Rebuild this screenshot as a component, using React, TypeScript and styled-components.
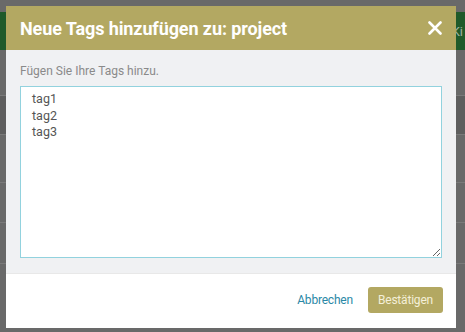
import styled, { createGlobalStyle } from 'styled-components'

const GlobalStyle = createGlobalStyle`
  html, body {
    margin: 0;
    padding: 0;
    width: 465px;
    height: 332px;
    overflow: hidden;
    background: #696969;
    font-family: Roboto, 'Liberation Sans', sans-serif;
  }
`

const Page = styled.div`
  position: relative;
  width: 465px;
  height: 332px;
  background: #696969;
  padding-top: 12px;
  box-sizing: border-box;
`

const TopBar = styled.div`
  height: 38px;
  background: #1f5a2a;
  color: #9fb3a3;
  font-size: 13px;
  display: flex;
  align-items: center;
  justify-content: flex-end;
  padding-right: 2px;
`

const Row = styled.div<{ h: number; dark?: boolean }>`
  height: ${p => p.h}px;
  border-bottom: 1px solid #7a7a7a;
  background: ${p => (p.dark ? '#5e5e5e' : 'transparent')};
`

const Overlay = styled.div`
  position: absolute;
  inset: 0;
  padding: 6px 9px 4px 6px;
  box-sizing: border-box;
`

const Modal = styled.div`
  width: 450px;
  height: 322px;
  display: flex;
  flex-direction: column;
  background: #fff;
`

const Header = styled.div`
  height: 44px;
  background: #b3a862;
  display: flex;
  align-items: center;
  justify-content: space-between;
  padding: 0 13px 0 14px;
  flex-shrink: 0;
`

const Title = styled.h2`
  margin: 0;
  color: #fff;
  font-size: 18px;
  font-weight: 700;
  letter-spacing: -0.1px;
`

const CloseButton = styled.button`
  border: 0;
  background: none;
  padding: 0;
  width: 16px;
  height: 16px;
  display: flex;
  align-items: center;
  justify-content: center;
  cursor: pointer;
`

const Body = styled.div`
  background: #f0f1f3;
  padding: 13px 14px 15px 14px;
  display: flex;
  flex-direction: column;
  flex-shrink: 0;
`

const Label = styled.label`
  color: #8a8a8a;
  font-size: 12px;
  line-height: 16px;
  margin-bottom: 7px;
`

const TagInput = styled.textarea`
  height: 172px;
  box-sizing: border-box;
  border: 1px solid #92d2de;
  border-radius: 0;
  padding: 4px 11px;
  font-family: Roboto, 'Liberation Sans', sans-serif;
  font-size: 12.5px;
  line-height: 16.5px;
  color: #555;
  background: #fff;
  outline: none;
  resize: vertical;
`

const Footer = styled.div`
  flex: 1;
  border-top: 1px solid #e8e8e8;
  display: flex;
  align-items: center;
  justify-content: flex-end;
  gap: 15px;
  padding: 0 13px 2px 0;
`

const LinkButton = styled.button`
  border: 0;
  background: none;
  color: #2a88a6;
  font-family: Roboto, 'Liberation Sans', sans-serif;
  font-size: 12px;
  letter-spacing: -0.2px;
  padding: 0;
  cursor: pointer;
`

const PrimaryButton = styled.button`
  border: 0;
  border-radius: 3px;
  background: #b3a862;
  color: #f4efd8;
  font-family: Roboto, 'Liberation Sans', sans-serif;
  font-size: 12px;
  letter-spacing: -0.2px;
  height: 26px;
  padding: 0 10px;
  cursor: pointer;
`

const App = () => {
  return (
    <>
      <GlobalStyle />
      <Page>
        <TopBar>Ki</TopBar>
        <Row h={45} />
        <Row h={38} dark />
        <Row h={47} />
        <Row h={39} />
        <Row h={40} />
        <Overlay>
          <Modal>
            <Header>
              <Title>Neue Tags hinzufügen zu: project</Title>
              <CloseButton aria-label="close">
                <svg width="14" height="14" viewBox="0 0 14 14">
                  <path d="M1.5 1.5 L12.5 12.5 M12.5 1.5 L1.5 12.5" stroke="#fff" strokeWidth="2.6" strokeLinecap="round" />
                </svg>
              </CloseButton>
            </Header>
            <Body>
              <Label>Fügen Sie Ihre Tags hinzu.</Label>
              <TagInput defaultValue={'tag1\ntag2\ntag3'} />
            </Body>
            <Footer>
              <LinkButton>Abbrechen</LinkButton>
              <PrimaryButton>Bestätigen</PrimaryButton>
            </Footer>
          </Modal>
        </Overlay>
      </Page>
    </>
  )
}

export default App
